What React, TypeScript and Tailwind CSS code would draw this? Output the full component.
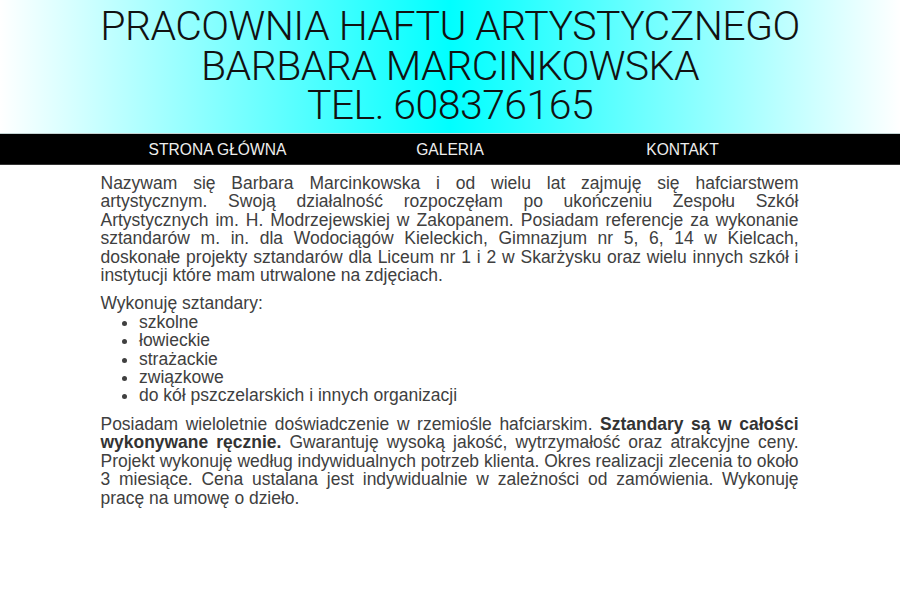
const menu = ["STRONA GŁÓWNA", "GALERIA", "KONTAKT"];

const types = [
  "szkolne",
  "łowieckie",
  "strażackie",
  "związkowe",
  "do kół pszczelarskich i innych organizacji",
];

const App = () => {
  return (
    <div className="min-h-[609px] bg-white font-['Liberation_Sans',Arial,sans-serif]">
      <header className="h-[134px] pt-[7px] border-b border-[#c4d4d4] bg-[linear-gradient(to_right,#ffffff,#00ffff,#ffffff)]">
        <div className="flex flex-col items-center text-[#111111] font-['Roboto',sans-serif] font-light text-[41px] leading-[39.5px]">
          <h1 className="tracking-[-0.55px] whitespace-nowrap">PRACOWNIA HAFTU ARTYSTYCZNEGO</h1>
          <h2 className="tracking-[-0.55px] whitespace-nowrap">BARBARA MARCINKOWSKA</h2>
          <h2 className="tracking-[-0.55px] whitespace-nowrap">TEL. 608376165</h2>
        </div>
      </header>

      <nav className="h-[31px] pt-px bg-black border-b border-[#333333]">
        <ul className="w-[77.5%] h-full mx-auto grid grid-cols-3">
          {menu.map((item) => (
            <li key={item} className="flex items-center justify-center text-[15.6px] text-[#eeeeee]">
              {item}
            </li>
          ))}
        </ul>
      </nav>

      <main className="w-[698px] ml-[100.5px] pt-[9px] text-[17.5px] leading-[18.4px] text-[#404040]">
        <p className="text-justify">
          Nazywam się Barbara Marcinkowska i od wielu lat zajmuję się hafciarstwem artystycznym. Swoją działalność
          rozpoczęłam po ukończeniu Zespołu Szkół Artystycznych im. H. Modrzejewskiej w Zakopanem. Posiadam referencje
          za wykonanie sztandarów m. in. dla Wodociągów Kieleckich, Gimnazjum nr 5, 6, 14 w Kielcach, doskonałe projekty
          sztandarów dla Liceum nr 1 i 2 w Skarżysku oraz wielu innych szkół i instytucji które mam utrwalone na
          zdjęciach.
        </p>
        <p className="mt-[10px]">Wykonuję sztandary:</p>
        <ul className="list-disc pl-[38.5px]">
          {types.map((t) => (
            <li key={t}>{t}</li>
          ))}
        </ul>
        <p className="mt-[10px] text-[17.47px] text-justify">
          Posiadam wieloletnie doświadczenie w rzemiośle hafciarskim.{" "}
          <strong className="font-bold text-[#333333]">Sztandary są w całości wykonywane ręcznie.</strong> Gwarantuję
          wysoką jakość, wytrzymałość oraz atrakcyjne ceny. Projekt wykonuję według indywidualnych potrzeb klienta. Okres
          realizacji zlecenia to około 3 miesiące. Cena ustalana jest indywidualnie w zależności od zamówienia. Wykonuję
          pracę na umowę o dzieło.
        </p>
      </main>
    </div>
  );
};

export default App;
